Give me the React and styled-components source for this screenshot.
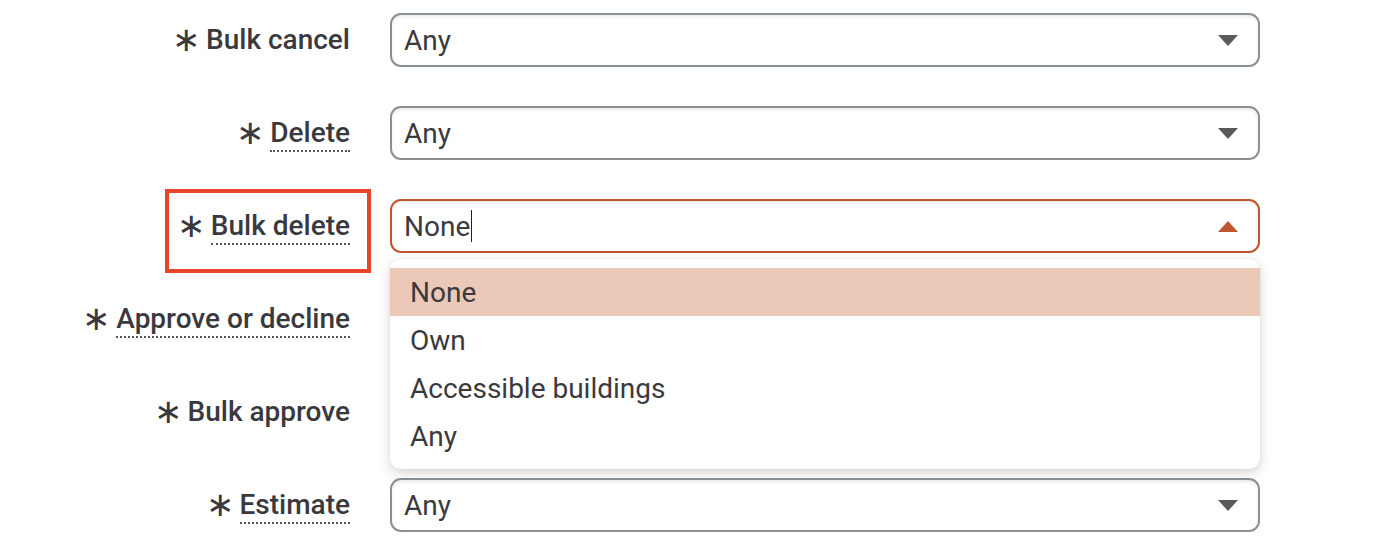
import React from 'react';
import styled, { createGlobalStyle } from 'styled-components';

const GlobalStyle = createGlobalStyle`
  body {
    margin: 0;
    background: #fff;
    font-family: Roboto, "Liberation Sans", sans-serif;
    color: #3a3a3e;
  }
`;

const Form = styled.div`
  display: grid;
  grid-template-columns: 350px 870px;
  column-gap: 40px;
  row-gap: 39px;
  padding-top: 13px;
`;

const LabelCell = styled.div`
  position: relative;
  height: 54px;
  display: flex;
  align-items: center;
  justify-content: flex-end;
  gap: 6px;
  font-size: 28px;
  font-weight: 500;
`;

const Star = styled.span`
  font-size: 34px;
  font-weight: 300;
  line-height: 1;
  margin-top: -2px;
`;

const LabelText = styled.span`
  line-height: 30px;
  border-bottom: ${p => (p.$hint ? '2px dotted #55555a' : '2px solid transparent')};
  padding-bottom: 2px;
  margin-top: 3px;
`;

const Highlight = styled.div`
  position: absolute;
  left: 165px;
  top: -10px;
  width: 206px;
  height: 84px;
  box-sizing: border-box;
  border: 4px solid #e8442a;
`;

const Field = styled.div`
  position: relative;
`;

const SelectBox = styled.div`
  height: 54px;
  box-sizing: border-box;
  border: 2px solid ${p => (p.$open ? '#c0562d' : '#8b9094')};
  border-radius: 11px;
  box-shadow: inset 0 2px 3px rgba(90, 70, 70, 0.1);
  display: flex;
  align-items: center;
  padding: 0 20px 0 12px;
  font-size: 28px;
`;

const Value = styled.span`
  flex: 1;
  display: flex;
  align-items: center;
`;

const Caret = styled.span`
  display: inline-block;
  width: 1px;
  height: 32px;
  background: #222;
  margin-left: 1px;
`;

const Arrow = styled.svg`
  width: 20px;
  height: 11px;
  fill: ${p => (p.$open ? '#c0562d' : '#5a5a5a')};
`;

const Menu = styled.ul`
  position: absolute;
  z-index: 2;
  left: 0;
  right: 0;
  top: 60px;
  margin: 0;
  padding: 9px 0;
  list-style: none;
  background: #fff;
  border-radius: 11px;
  box-shadow: 0 4px 12px rgba(80, 60, 55, 0.22), 0 0 2px rgba(0, 0, 0, 0.08);
`;

const Option = styled.li`
  height: 48px;
  display: flex;
  align-items: center;
  padding-left: 20px;
  font-size: 28px;
  background: ${p => (p.$active ? '#ebc8b8' : 'transparent')};
`;

const rows = [
  { label: 'Bulk cancel', hint: false, value: 'Any' },
  { label: 'Delete', hint: true, value: 'Any' },
  { label: 'Bulk delete', hint: true, value: 'None', open: true, marked: true },
  { label: 'Approve or decline', hint: true, value: 'Any' },
  { label: 'Bulk approve', hint: false, value: 'Any' },
  { label: 'Estimate', hint: true, value: 'Any' },
];

const options = ['None', 'Own', 'Accessible buildings', 'Any'];

const App = () => {
  return (
    <>
      <GlobalStyle />
      <Form>
        {rows.map(row => (
          <React.Fragment key={row.label}>
            <LabelCell>
              <Star>∗</Star>
              <LabelText $hint={row.hint}>{row.label}</LabelText>
              {row.marked && <Highlight />}
            </LabelCell>
            <Field>
              <SelectBox $open={row.open}>
                <Value>
                  {row.value}
                  {row.open && <Caret />}
                </Value>
                <Arrow $open={row.open} viewBox="0 0 20 11">
                  {row.open ? <path d="M0 11 L10 0 L20 11 Z" /> : <path d="M0 0 L20 0 L10 11 Z" />}
                </Arrow>
              </SelectBox>
              {row.open && (
                <Menu>
                  {options.map(o => (
                    <Option key={o} $active={o === row.value}>{o}</Option>
                  ))}
                </Menu>
              )}
            </Field>
          </React.Fragment>
        ))}
      </Form>
    </>
  );
};

export default App;
